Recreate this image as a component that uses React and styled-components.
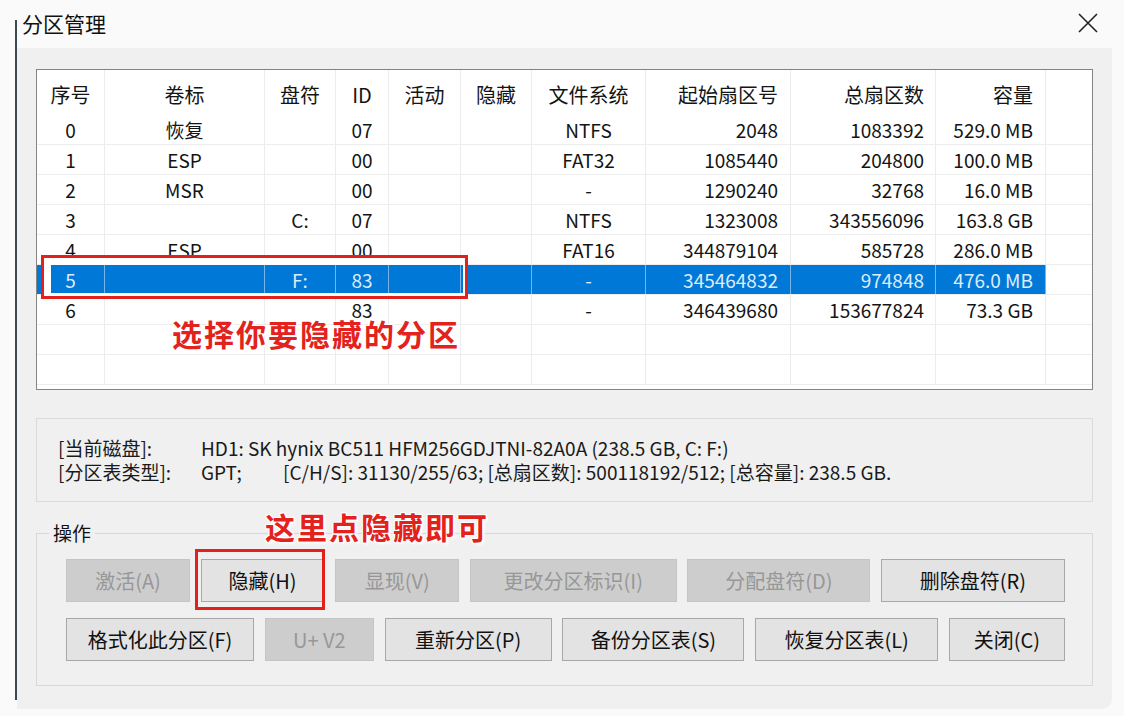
import React from "react";
import styled, { createGlobalStyle } from "styled-components";

const GlobalStyle = createGlobalStyle`
  html, body {
    margin: 0;
    padding: 0;
    background: #fafafa;
  }
  body {
    font-family: "Noto Sans CJK SC", "Noto Sans", sans-serif;
    color: #141414;
  }
`;

const Window = styled.div`
  position: relative;
  width: 1124px;
  height: 716px;
  overflow: hidden;
  display: flex;
  flex-direction: column;

  &::before {
    content: "";
    position: absolute;
    left: 15px;
    top: 20px;
    bottom: 16px;
    width: 2px;
    background: #3a4850;
  }
`;

const TitleBar = styled.div`
  height: 48px;
  box-sizing: border-box;
  display: flex;
  align-items: center;
  justify-content: space-between;
  padding: 0 26px 2px 22px;
`;

const Title = styled.div`
  font-size: 21px;
  line-height: 24px;
  color: #111;
`;

const CloseIcon = () => (
  <svg width="20" height="20" viewBox="0 0 20 20">
    <path d="M1 1 L19 19 M19 1 L1 19" stroke="#222" strokeWidth="1.6" fill="none" />
  </svg>
);

const Body = styled.div`
  margin-left: 17px;
  width: 1095px;
  height: 661px;
  box-sizing: border-box;
  padding: 21px 19px 0 19px;
  background: #f0f0f0;
  border-bottom-right-radius: 10px;
  display: flex;
  flex-direction: column;
`;

const ListBox = styled.div`
  position: relative;
  height: 321px;
  box-sizing: border-box;
  border: 1px solid #848484;
  background: #fff;
  overflow: hidden;
`;

const COLS = "68px 160px 71px 53px 72px 71px 114px 145px 145px 110px 1fr";

const HeadRow = styled.div`
  display: grid;
  grid-template-columns: ${COLS};
  height: 45px;
`;

const Row = styled.div`
  display: grid;
  grid-template-columns: ${COLS};
  height: 30px;
  box-sizing: border-box;
  border-bottom: 1px solid #ededed;
`;

const Cell = styled.div`
  box-sizing: border-box;
  border-right: 1px solid ${(p) => (p.$sel ? "#7db4e6" : "#ececec")};
  background: ${(p) => (p.$sel ? "#0078d7" : "transparent")};
  color: ${(p) => (p.$sel ? "#dcecfa" : "#141414")};
  display: flex;
  align-items: center;
  justify-content: ${(p) => (p.$align === "right" ? "flex-end" : "center")};
  padding-right: ${(p) => (p.$align === "right" ? p.$pad : 0)}px;
  font-size: ${(p) => (p.$head ? 20 : 19)}px;
  line-height: 24px;
  padding-top: ${(p) => (p.$head ? 4 : 0)}px;
  white-space: nowrap;
  overflow: hidden;
`;

const Filler = styled.div`
  border-right: none;
`;

const RowMark = styled.div`
  position: absolute;
  left: 4px;
  top: 185px;
  width: 427px;
  height: 44px;
  box-sizing: border-box;
  border: 3px solid #e0211c;
  box-shadow: inset 7px 0 0 #fff, inset 0 7px 0 #fff, inset -2px 0 0 #fff,
    inset 0 -3px 0 #fff;
`;

const Hint = styled.div`
  position: absolute;
  left: ${(p) => p.$x}px;
  top: ${(p) => p.$y}px;
  font-size: 30px;
  line-height: 36px;
  font-weight: 700;
  letter-spacing: 2px;
  color: #e3221d;
  white-space: nowrap;
  text-shadow: 0 0 2px #fff, 1px 1px 0 #fff, -1px -1px 0 #fff, 1px -1px 0 #fff,
    -1px 1px 0 #fff, 2px 2px 3px rgba(255, 255, 255, 0.9);
`;

const InfoPanel = styled.div`
  margin-top: 28px;
  height: 84px;
  box-sizing: border-box;
  border: 1px solid #dadada;
  padding: 17px 0 0 21px;
  font-size: 19px;
  line-height: 24px;
  color: #1a1a1a;
`;

const InfoLine = styled.div`
  display: flex;
  white-space: nowrap;
`;

const InfoLabel = styled.span`
  width: ${(p) => p.$w}px;
  flex-shrink: 0;
`;

const Group = styled.fieldset`
  margin: 20px 0 0 0;
  padding: 0 0 24px 12px;
  border: 1px solid #d8d8d8;
  min-width: 0;
`;

const Legend = styled.legend`
  padding: 0 4px;
  font-size: 19px;
  line-height: 22px;
  color: #111;
`;

const ButtonArea = styled.div`
  position: relative;
  width: 999px;
  margin: 15px 0 0 17px;
  display: flex;
  flex-direction: column;
  gap: 16px;
`;

const ButtonRow = styled.div`
  display: flex;
  justify-content: space-between;
`;

const Button = styled.button`
  position: relative;
  width: ${(p) => p.$w}px;
  height: 43px;
  box-sizing: border-box;
  padding: 0;
  border: 1px solid ${(p) => (p.disabled ? "#c4c4c4" : "#a8a8a8")};
  background: ${(p) => (p.disabled ? "#cdcdcd" : "#e3e3e3")};
  color: ${(p) => (p.disabled ? "#979797" : "#111")};
  font-family: "Noto Sans CJK SC", "Noto Sans", sans-serif;
  font-size: 20px;
  line-height: 24px;

  ${(p) =>
    p.$marked &&
    `
    &::after {
      content: "";
      position: absolute;
      left: -7px;
      top: -11px;
      right: -1px;
      bottom: -9px;
      border: 3px solid #e0211c;
    }
  `}
`;

const columns = [
  { title: "序号", align: "center" },
  { title: "卷标", align: "center" },
  { title: "盘符", align: "center" },
  { title: "ID", align: "center" },
  { title: "活动", align: "center" },
  { title: "隐藏", align: "center" },
  { title: "文件系统", align: "center" },
  { title: "起始扇区号", align: "right", pad: 12 },
  { title: "总扇区数", align: "right", pad: 11 },
  { title: "容量", align: "right", pad: 12 },
];

const rows = [
  ["0", "恢复", "", "07", "", "", "NTFS", "2048", "1083392", "529.0 MB"],
  ["1", "ESP", "", "00", "", "", "FAT32", "1085440", "204800", "100.0 MB"],
  ["2", "MSR", "", "00", "", "", "-", "1290240", "32768", "16.0 MB"],
  ["3", "", "C:", "07", "", "", "NTFS", "1323008", "343556096", "163.8 GB"],
  ["4", "ESP", "", "00", "", "", "FAT16", "344879104", "585728", "286.0 MB"],
  ["5", "", "F:", "83", "", "", "-", "345464832", "974848", "476.0 MB"],
  ["6", "", "", "83", "", "", "-", "346439680", "153677824", "73.3 GB"],
  ["", "", "", "", "", "", "", "", "", ""],
  ["", "", "", "", "", "", "", "", "", ""],
];

const buttonsTop = [
  { label: "激活(A)", w: 124, disabled: true },
  { label: "隐藏(H)", w: 124, marked: true },
  { label: "显现(V)", w: 124, disabled: true },
  { label: "更改分区标识(I)", w: 207, disabled: true },
  { label: "分配盘符(D)", w: 183, disabled: true },
  { label: "删除盘符(R)", w: 184 },
];

const buttonsBottom = [
  { label: "格式化此分区(F)", w: 188 },
  { label: "U+ V2", w: 109, disabled: true },
  { label: "重新分区(P)", w: 167 },
  { label: "备份分区表(S)", w: 182 },
  { label: "恢复分区表(L)", w: 183 },
  { label: "关闭(C)", w: 116 },
];

const SELECTED = 5;

const App = () => {
  return (
    <Window>
      <GlobalStyle />
      <TitleBar>
        <Title>分区管理</Title>
        <CloseIcon />
      </TitleBar>
      <Body>
        <ListBox>
          <HeadRow>
            {columns.map((c) => (
              <Cell key={c.title} $head $align={c.align} $pad={c.pad}>
                {c.title}
              </Cell>
            ))}
            <Filler />
          </HeadRow>
          {rows.map((r, i) => (
            <Row key={i}>
              {r.map((v, j) => (
                <Cell
                  key={j}
                  $sel={i === SELECTED}
                  $align={columns[j].align}
                  $pad={columns[j].pad}
                >
                  {v}
                </Cell>
              ))}
              <Filler />
            </Row>
          ))}
          <RowMark />
          <Hint $x={135} $y={245}>选择你要隐藏的分区</Hint>
        </ListBox>

        <InfoPanel>
          <InfoLine>
            <InfoLabel $w={143}>[当前磁盘]:</InfoLabel>
            <span>HD1: SK hynix BC511 HFM256GDJTNI-82A0A (238.5 GB, C: F:)</span>
          </InfoLine>
          <InfoLine>
            <InfoLabel $w={143}>[分区表类型]:</InfoLabel>
            <InfoLabel $w={82}>GPT;</InfoLabel>
            <span>[C/H/S]: 31130/255/63; [总扇区数]: 500118192/512; [总容量]: 238.5 GB.</span>
          </InfoLine>
        </InfoPanel>

        <Group>
          <Legend>操作</Legend>
          <ButtonArea>
            <Hint $x={199} $y={-51}>这里点隐藏即可</Hint>
            <ButtonRow>
              {buttonsTop.map((b) => (
                <Button key={b.label} $w={b.w} disabled={b.disabled} $marked={b.marked}>
                  {b.label}
                </Button>
              ))}
            </ButtonRow>
            <ButtonRow>
              {buttonsBottom.map((b) => (
                <Button key={b.label} $w={b.w} disabled={b.disabled}>
                  {b.label}
                </Button>
              ))}
            </ButtonRow>
          </ButtonArea>
        </Group>
      </Body>
    </Window>
  );
};

export default App;
